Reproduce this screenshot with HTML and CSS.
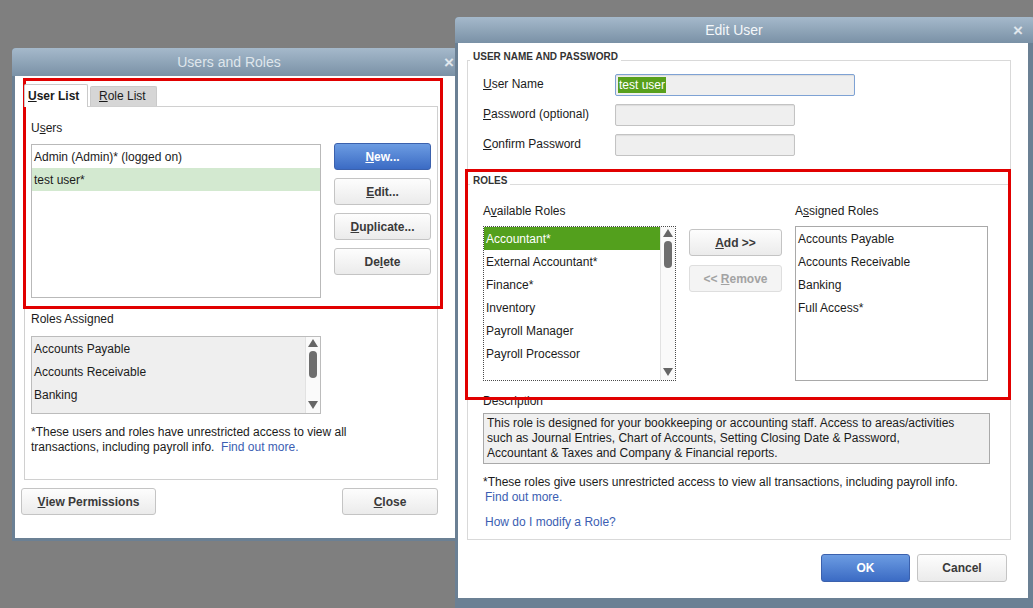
FILE: index.html
```html
<!DOCTYPE html>
<html lang="en">
<head>
  <meta charset="UTF-8">
  <meta name="viewport" content="width=device-width, initial-scale=1.0">
  <title>Users and Roles</title>
  <link rel="stylesheet" href="styles.css">
</head>
<body>

  <!-- Users and Roles window -->
  <section class="window window_users">
    <header class="window__title">
      <span></span>
      <span class="window__caption">Users and Roles</span>
      <span class="window__close">&times;</span>
    </header>

    <div class="window__body users">
      <div class="tabs">
        <span class="tab tab_active"><u>U</u>ser List</span>
        <span class="tab"><u>R</u>ole List</span>
      </div>

      <div class="tab-panel">
        <div class="label">U<u>s</u>ers</div>

        <div class="users__row">
          <ul class="list list_users">
            <li class="list__item">Admin (Admin)* (logged on)</li>
            <li class="list__item list__item_marked">test user*</li>
          </ul>

          <div class="btn-stack">
            <button class="btn btn_primary"><u>N</u>ew...</button>
            <button class="btn"><u>E</u>dit...</button>
            <button class="btn"><u>D</u>uplicate...</button>
            <button class="btn">De<u>l</u>ete</button>
          </div>
        </div>

        <div class="label users__roles-label">Roles Assigned</div>

        <div class="list list_gray list_roles">
          <ul class="list__items">
            <li class="list__item">Accounts Payable</li>
            <li class="list__item">Accounts Receivable</li>
            <li class="list__item">Banking</li>
          </ul>
          <div class="scrollbar">
            <span class="scrollbar__up"></span>
            <span class="scrollbar__thumb"></span>
            <span class="scrollbar__down"></span>
          </div>
        </div>

        <p class="note users__note">*These users and roles have unrestricted access to view all<br>transactions, including payroll info. &nbsp;<a class="link" href="#">Find out more.</a></p>
      </div>

      <div class="footer users__footer">
        <button class="btn btn_wide"><u>V</u>iew Permissions</button>
        <button class="btn btn_close"><u>C</u>lose</button>
      </div>

      <div class="highlight highlight_users"></div>
    </div>
  </section>

  <!-- Edit User window -->
  <section class="window window_edit">
    <header class="window__title window__title_active">
      <span></span>
      <span class="window__caption">Edit User</span>
      <span class="window__close">&times;</span>
    </header>

    <div class="window__body edit">
      <div class="panel">
        <span class="legend">USER NAME AND PASSWORD</span>

        <div class="form">
          <span class="form__label"><u>U</u>ser Name</span>
          <div class="field field_focus field_long"><span class="field__sel">test user</span></div>

          <span class="form__label"><u>P</u>assword (optional)</span>
          <div class="field"></div>

          <span class="form__label"><u>C</u>onfirm Password</span>
          <div class="field"></div>
        </div>

        <div class="roles">
          <span class="legend">ROLES</span>

          <div class="roles__grid">
            <span class="label">A<u>v</u>ailable Roles</span>
            <span></span>
            <span class="label">A<u>s</u>signed Roles</span>

            <div class="list list_focus">
              <ul class="list__items">
                <li class="list__item list__item_selected">Accountant*</li>
                <li class="list__item">External Accountant*</li>
                <li class="list__item">Finance*</li>
                <li class="list__item">Inventory</li>
                <li class="list__item">Payroll Manager</li>
                <li class="list__item">Payroll Processor</li>
              </ul>
              <div class="scrollbar scrollbar_tall">
                <span class="scrollbar__up"></span>
                <span class="scrollbar__thumb"></span>
                <span class="scrollbar__down"></span>
              </div>
            </div>

            <div class="btn-stack btn-stack_roles">
              <button class="btn"><u>A</u>dd &gt;&gt;</button>
              <button class="btn btn_disabled">&lt;&lt; <u>R</u>emove</button>
            </div>

            <ul class="list list_assigned">
              <li class="list__item">Accounts Payable</li>
              <li class="list__item">Accounts Receivable</li>
              <li class="list__item">Banking</li>
              <li class="list__item">Full Access*</li>
            </ul>
          </div>

          <div class="label roles__desc-label">Description</div>
          <div class="description">This role is designed for your bookkeeping or accounting staff. Access to areas/activities<br>such as Journal Entries, Chart of Accounts, Setting Closing Date &amp; Password,<br>Accountant &amp; Taxes and Company &amp; Financial reports.</div>

          <p class="note roles__note">*These roles give users unrestricted access to view all transactions, including payroll info.<br><a class="link" href="#">Find out more.</a></p>
          <a class="link roles__help" href="#">How do I modify a Role?</a>
        </div>
      </div>

      <div class="footer edit__footer">
        <button class="btn btn_primary btn_ok">OK</button>
        <button class="btn btn_cancel">Cancel</button>
      </div>

      <div class="highlight highlight_roles"></div>
    </div>
  </section>

</body>
</html>
```

FILE: styles.css
```css
*, *:after, *:before {
  box-sizing: border-box;
}

html, body {
  margin: 0;
  height: 100%;
}

body {
  position: relative;
  overflow: hidden;
  background-color: #7f7f7f;
  font-family: "Liberation Sans", Arial, sans-serif;
  font-size: 12px;
  color: #1b1b1b;
}

ul {
  margin: 0;
  padding: 0;
  list-style: none;
}

p {
  margin: 0;
}

/* windows */

.window {
  position: absolute;
  display: flex;
  flex-direction: column;
  background-color: #6b8094;
  border-radius: 4px 4px 0 0;
}

.window_users {
  left: 12px;
  top: 48px;
  width: 446px;
}

.window_edit {
  left: 455px;
  top: 17px;
  width: 580px;
  padding-bottom: 10px;
}

.window__title {
  display: grid;
  grid-template-columns: 1fr auto 1fr;
  align-items: center;
  height: 28px;
  padding: 0 4px;
  background: linear-gradient(#a5b9cb, #7a91a6);
  border-radius: 4px 4px 0 0;
  color: #dfe6ec;
  font-size: 14px;
}

.window_users .window__caption {
  margin-right: 12px;
}

.window__title_active {
  height: 26px;
  padding-right: 12px;
  color: #f4f7fa;
}

.window__title_active .window__caption {
  margin-right: 14px;
}

.window__close {
  justify-self: end;
  color: #e1e7ed;
  font-size: 17px;
  font-weight: 700;
  line-height: 1;
}

.window__body {
  position: relative;
  margin: 0 3px 3px;
  background-color: #fff;
}

.window_edit .window__body {
  margin-right: 7px;
  margin-bottom: 0;
}

/* common controls */

u {
  text-underline-offset: 1px;
}

.label {
  height: 14px;
  line-height: 14px;
}

.link {
  color: #3b5eb2;
  text-decoration: none;
}

.note {
  line-height: 15px;
}

.btn {
  height: 27px;
  padding: 0 6px;
  background: linear-gradient(#fdfdfd, #ebebeb);
  border: 1px solid #c4c4c4;
  border-radius: 3px;
  color: #3a3a3a;
  font-family: inherit;
  font-size: 12px;
  font-weight: 700;
  cursor: pointer;
}

.btn_primary {
  background: linear-gradient(#6c9ce2, #3b6bc4);
  border-color: #3b61ad;
  color: #fff;
}

.btn_disabled {
  background: #f4f4f4;
  border-color: #dedede;
  color: #a3a3a3;
}

.btn-stack {
  display: grid;
  grid-auto-rows: 27px;
  row-gap: 8px;
  align-content: start;
}

.list {
  display: flex;
  flex-direction: column;
  border: 1px solid #b9b9b9;
  background-color: #fff;
}

.list:has(.scrollbar) {
  flex-direction: row;
}

.list__items {
  flex: 1;
}

.list__item {
  height: 23px;
  padding-left: 2px;
  line-height: 24px;
  white-space: nowrap;
}

.list__item_marked {
  background-color: #d3e9d0;
}

.list__item_selected {
  background-color: #53a01d;
  color: #fff;
}

.list_gray {
  background-color: #efefef;
  border-color: #bcbcbc;
}

.list_focus {
  border: 1px dotted #4a4a4a;
}

.scrollbar {
  display: flex;
  flex-direction: column;
  align-items: center;
  width: 15px;
  padding: 2px 0 4px;
  background-color: #fafafa;
  border-left: 1px solid #e2e2e2;
}

.scrollbar__up,
.scrollbar__down {
  width: 0;
  height: 0;
  border-left: 5px solid transparent;
  border-right: 5px solid transparent;
}

.scrollbar__up {
  border-bottom: 8px solid #666;
}

.scrollbar__down {
  margin-top: auto;
  border-top: 8px solid #666;
}

.scrollbar__thumb {
  width: 8px;
  height: 27px;
  margin-top: 4px;
  border-radius: 4px;
  background-color: #6e6e6e;
}

.footer {
  display: flex;
}

.highlight {
  position: absolute;
  border: 3px solid #e10000;
  pointer-events: none;
}

/* Users and Roles */

.users {
  padding: 8px 17px 23px 9px;
}

.tabs {
  display: flex;
  align-items: flex-end;
  column-gap: 2px;
  height: 22px;
}

.tab {
  position: relative;
  width: 67px;
  height: 20px;
  padding-left: 8px;
  background-color: #d6d6d6;
  border: 1px solid #cacaca;
  border-bottom: none;
  border-radius: 2px 2px 0 0;
  line-height: 19px;
}

.tab_active {
  z-index: 1;
  width: 64px;
  height: 23px;
  margin-bottom: -1px;
  padding-left: 3px;
  background-color: #fff;
  font-weight: 700;
  line-height: 22px;
}

.tab-panel {
  height: 374px;
  padding: 14px 0 0 6px;
  border: 1px solid #d0d0d0;
}

.users__row {
  display: grid;
  grid-template-columns: 290px 97px;
  column-gap: 13px;
  margin-top: 8px;
}

.list_users {
  height: 154px;
  margin-top: 1px;
}

.users__roles-label {
  margin-top: 14px;
}

.list_roles {
  width: 290px;
  height: 78px;
  margin-top: 10px;
}

.users__note {
  margin-top: 11px;
}

.users__footer {
  justify-content: space-between;
  margin: 8px 0 0 -3px;
}

.btn_wide {
  width: 135px;
}

.btn_close {
  width: 96px;
}

.highlight_users {
  left: 8px;
  top: 2px;
  width: 420px;
  height: 231px;
}

/* Edit User */

.edit {
  padding: 17px 17px 16px 9px;
}

.panel {
  display: flex;
  flex-direction: column;
  height: 480px;
  border: 1px solid #d9d9d9;
}

.legend {
  align-self: flex-start;
  height: 12px;
  margin: -10px 0 0 2px;
  padding: 0 3px;
  background-color: #fff;
  color: #333;
  font-size: 10px;
  font-weight: 700;
  line-height: 12px;
}

.form {
  display: grid;
  grid-template-columns: 132px auto;
  grid-auto-rows: 22px;
  row-gap: 8px;
  align-items: center;
  margin-top: 11px;
  padding-left: 15px;
}

.form__label {
  margin-top: -2px;
}

.field {
  width: 180px;
  height: 22px;
  padding: 2px;
  background-color: #efefef;
  border: 1px solid #c3c3c3;
  border-radius: 2px;
  box-shadow: inset 0 1px 1px rgba(0, 0, 0, 0.08);
}

.field_long {
  width: 240px;
}

.field_focus {
  border-color: #7ea2d4;
}

.field__sel {
  display: inline-block;
  padding: 0 1px;
  background-color: #58a01c;
  color: #fff;
  line-height: 16px;
}

.roles {
  display: flex;
  flex-direction: column;
  margin-top: 28px;
  border-top: 1px solid #dcdcdc;
}

.roles__grid {
  display: grid;
  grid-template-columns: 193px 93px 193px;
  grid-template-rows: 14px 155px;
  column-gap: 13px;
  row-gap: 8px;
  margin-top: 17px;
  padding-left: 15px;
}

.btn-stack_roles {
  row-gap: 9px;
  margin-top: 3px;
}

.list_assigned {
  border-color: #a9a9a9;
}

.roles__desc-label {
  margin: 13px 0 0 15px;
}

.description {
  width: 507px;
  height: 51px;
  margin: 5px 0 0 15px;
  padding: 2px 3px;
  background-color: #f0f0f0;
  border: 1px solid #a9a9a9;
  line-height: 15px;
}

.roles__note {
  margin: 11px 0 0 15px;
}

.roles__note .link {
  margin-left: 2px;
}

.roles__help {
  align-self: flex-start;
  margin: 10px 0 0 17px;
  line-height: 14px;
}

.edit__footer {
  justify-content: flex-end;
  column-gap: 7px;
  margin: 14px 4px 0 0;
}

.btn_ok {
  width: 89px;
  height: 28px;
}

.btn_cancel {
  width: 90px;
  height: 28px;
}

.highlight_roles {
  left: 7px;
  top: 126px;
  width: 546px;
  height: 231px;
}
```
